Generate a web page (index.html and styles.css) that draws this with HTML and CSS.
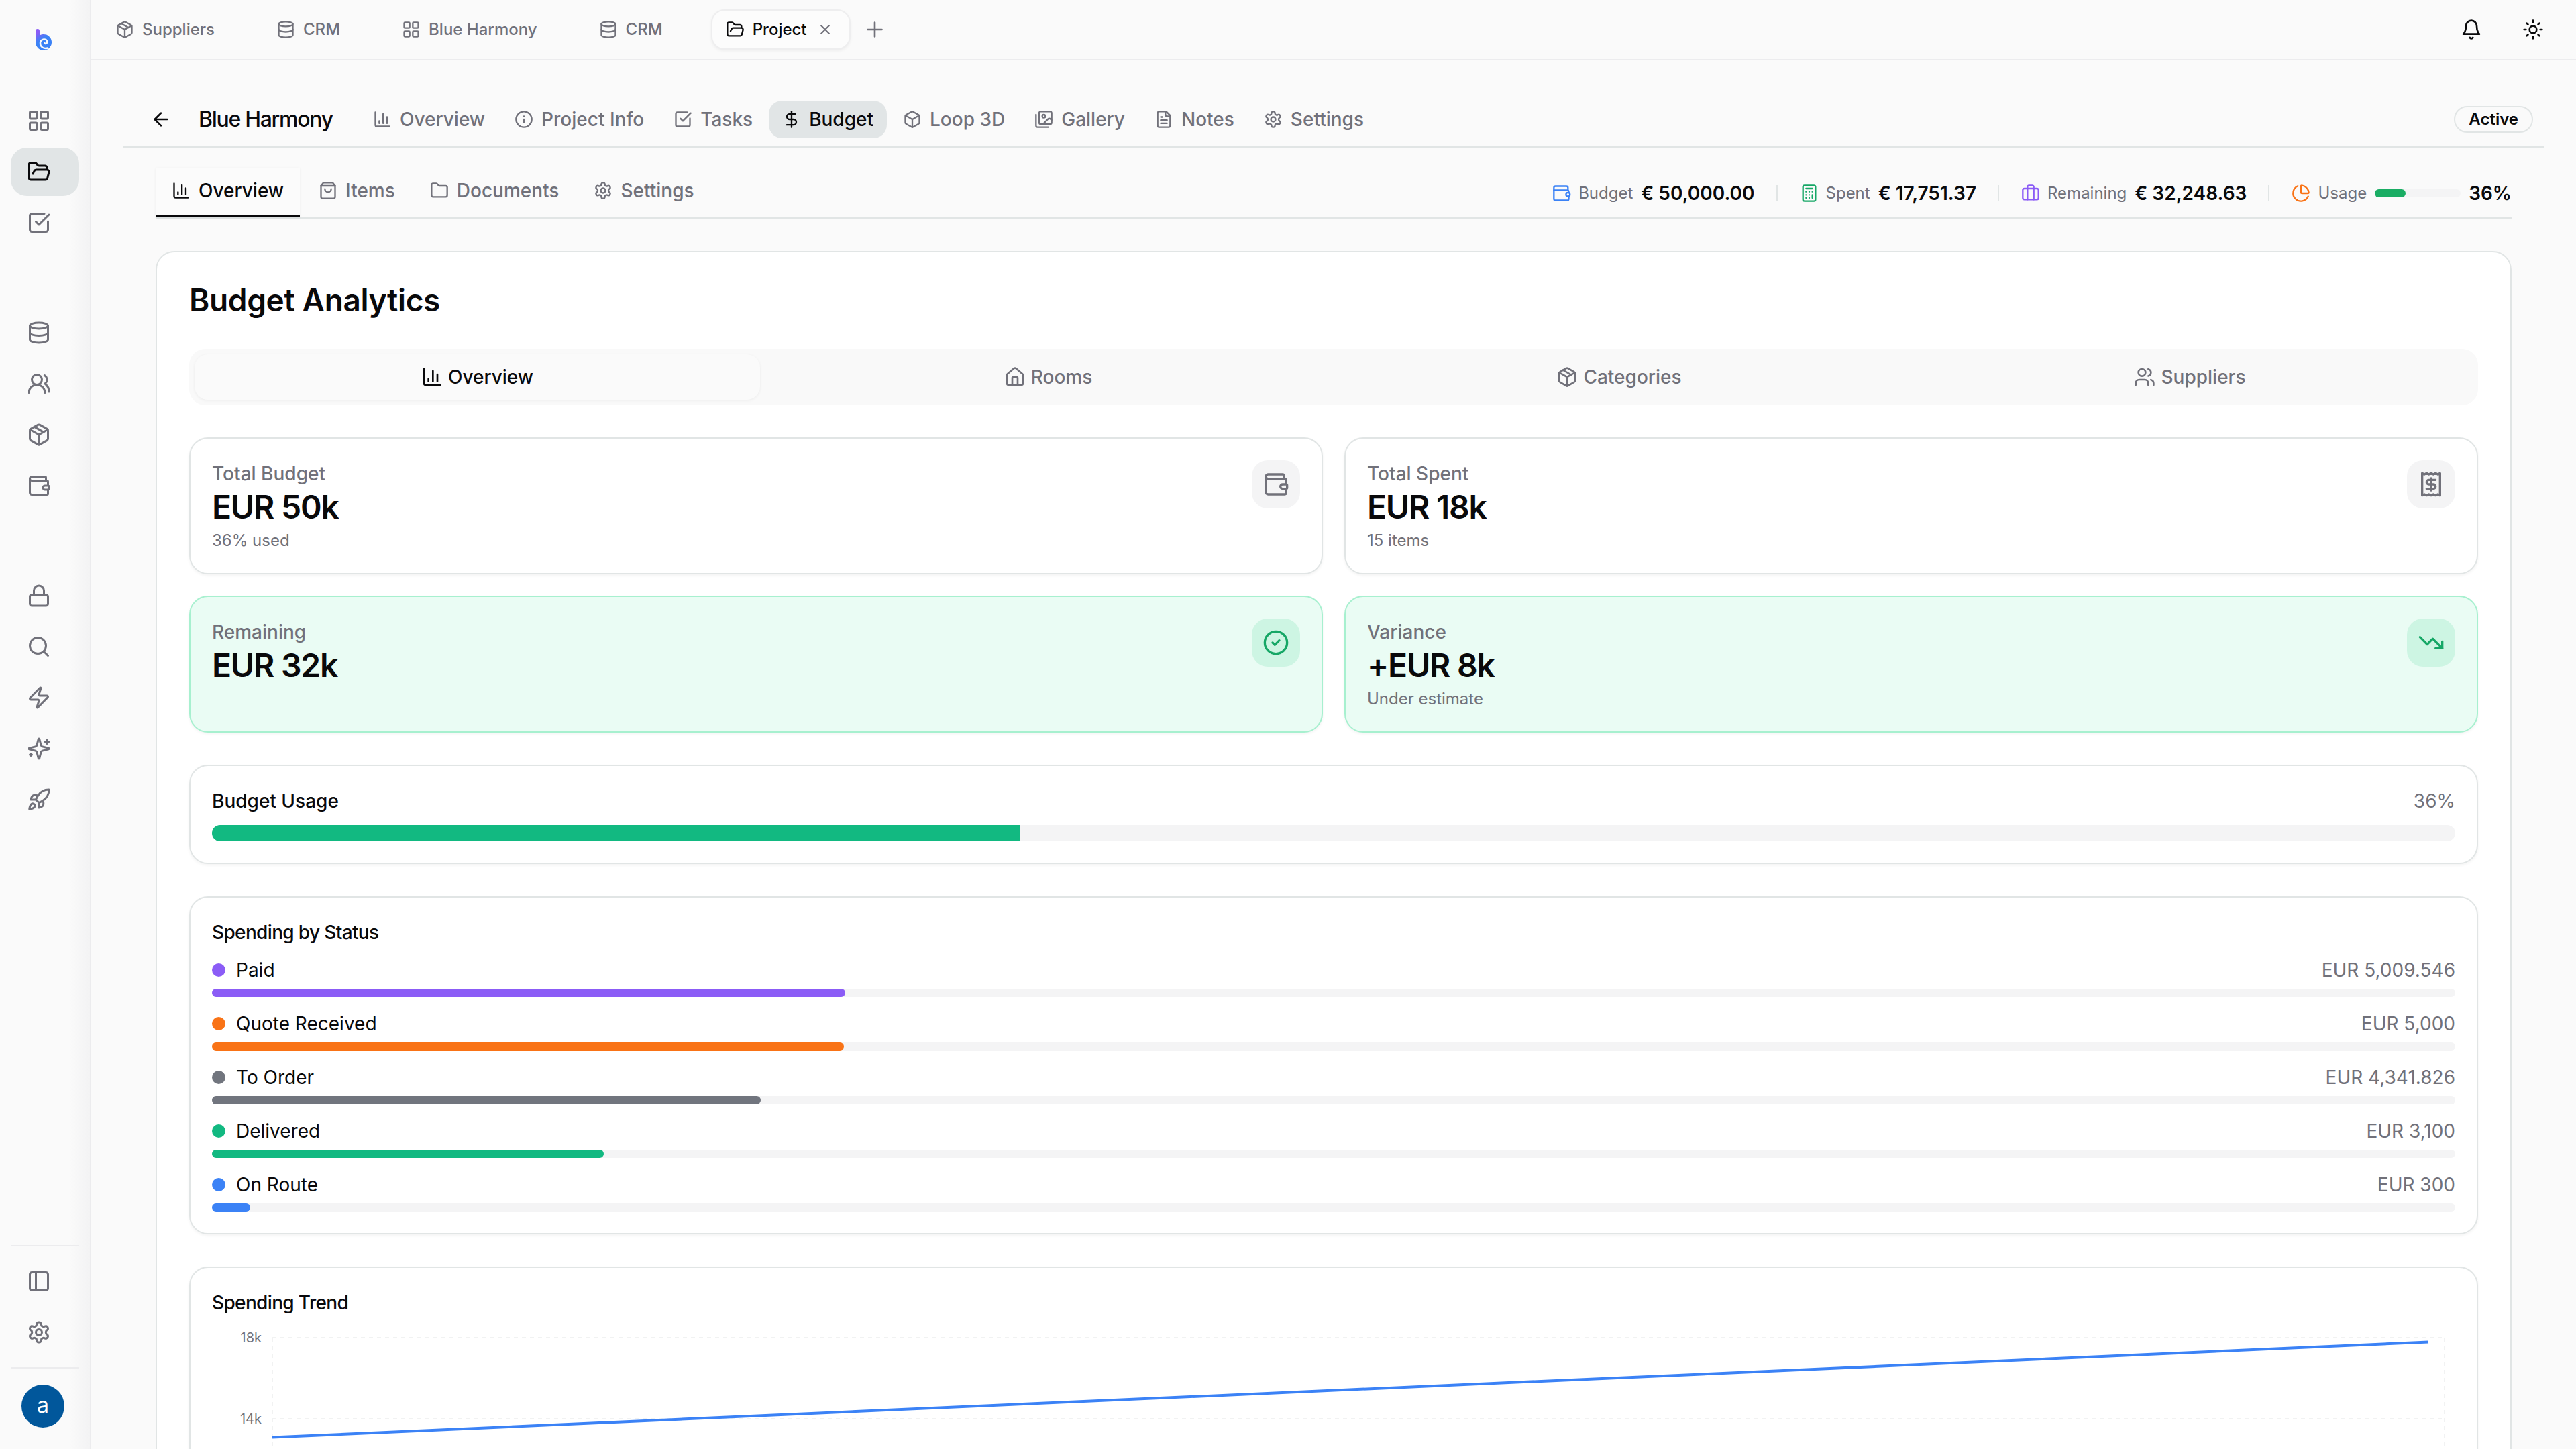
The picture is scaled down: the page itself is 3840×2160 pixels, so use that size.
FILE: index.html
```html
<!DOCTYPE html>
<html lang="en">
<head>
    <meta charset="UTF-8">
    <meta name="viewport" content="width=device-width, initial-scale=1.0">
    <title>Blue Harmony - Budget</title>
    <link rel="stylesheet" href="styles.css">
</head>
<body>
    <!-- icon sprite -->
    <svg class="sprite" width="0" height="0">
        <symbol id="grid" viewBox="0 0 24 24"><rect x="3" y="3" width="7" height="7" rx="1"/><rect x="14" y="3" width="7" height="7" rx="1"/><rect x="14" y="14" width="7" height="7" rx="1"/><rect x="3" y="14" width="7" height="7" rx="1"/></symbol>
        <symbol id="folder-open" viewBox="0 0 24 24"><path d="m6 14 1.5-2.9A2 2 0 0 1 9.24 10H20a2 2 0 0 1 1.94 2.5l-1.54 6a2 2 0 0 1-1.95 1.5H4a2 2 0 0 1-2-2V5a2 2 0 0 1 2-2h3.9a2 2 0 0 1 1.69.9l.81 1.2a2 2 0 0 0 1.67.9H18a2 2 0 0 1 2 2v2"/></symbol>
        <symbol id="check-square" viewBox="0 0 24 24"><path d="M21 10.656V19a2 2 0 0 1-2 2H5a2 2 0 0 1-2-2V5a2 2 0 0 1 2-2h12.344"/><path d="m9 11 3 3L22 4"/></symbol>
        <symbol id="database" viewBox="0 0 24 24"><ellipse cx="12" cy="5" rx="9" ry="3"/><path d="M3 5v14a9 3 0 0 0 18 0V5"/><path d="M3 12a9 3 0 0 0 18 0"/></symbol>
        <symbol id="users-round" viewBox="0 0 24 24"><path d="M18 21a8 8 0 0 0-16 0"/><circle cx="10" cy="8" r="5"/><path d="M22 20c0-3.37-2-6.5-4-8a5 5 0 0 0-.45-8.3"/></symbol>
        <symbol id="users" viewBox="0 0 24 24"><path d="M16 21v-2a4 4 0 0 0-4-4H6a4 4 0 0 0-4 4v2"/><circle cx="9" cy="7" r="4"/><path d="M22 21v-2a4 4 0 0 0-3-3.87"/><path d="M16 3.13a4 4 0 0 1 0 7.75"/></symbol>
        <symbol id="package" viewBox="0 0 24 24"><path d="M11 21.73a2 2 0 0 0 2 0l7-4A2 2 0 0 0 21 16V8a2 2 0 0 0-1-1.73l-7-4a2 2 0 0 0-2 0l-7 4A2 2 0 0 0 3 8v8a2 2 0 0 0 1 1.73z"/><path d="M12 22V12"/><path d="M3.29 7 12 12l8.71-5"/><path d="m7.5 4.27 9 5.15"/></symbol>
        <symbol id="box" viewBox="0 0 24 24"><path d="M11 21.73a2 2 0 0 0 2 0l7-4A2 2 0 0 0 21 16V8a2 2 0 0 0-1-1.73l-7-4a2 2 0 0 0-2 0l-7 4A2 2 0 0 0 3 8v8a2 2 0 0 0 1 1.73z"/><path d="M12 22V12"/><path d="m3.3 7 8.7 5 8.7-5"/></symbol>
        <symbol id="wallet" viewBox="0 0 24 24"><path d="M19 7V4a1 1 0 0 0-1-1H5a2 2 0 0 0 0 4h15a1 1 0 0 1 1 1v4h-3a2 2 0 0 0 0 4h3a1 1 0 0 0 1-1v-2a1 1 0 0 0-1-1"/><path d="M3 5v14a2 2 0 0 0 2 2h15a1 1 0 0 0 1-1v-4"/></symbol>
        <symbol id="lock" viewBox="0 0 24 24"><rect x="3" y="11" width="18" height="11" rx="2"/><path d="M7 11V7a5 5 0 0 1 10 0v4"/></symbol>
        <symbol id="search" viewBox="0 0 24 24"><circle cx="11" cy="11" r="8"/><path d="m21 21-4.3-4.3"/></symbol>
        <symbol id="zap" viewBox="0 0 24 24"><path d="M4 14a1 1 0 0 1-.78-1.63l9.9-10.2a.5.5 0 0 1 .86.46l-1.92 6.02A1 1 0 0 0 13 10h7a1 1 0 0 1 .78 1.63l-9.9 10.2a.5.5 0 0 1-.86-.46l1.92-6.02A1 1 0 0 0 11 14z"/></symbol>
        <symbol id="sparkles" viewBox="0 0 24 24"><path d="M9.937 15.5A2 2 0 0 0 8.5 14.063l-6.135-1.582a.5.5 0 0 1 0-.962L8.5 9.936A2 2 0 0 0 9.937 8.5l1.582-6.135a.5.5 0 0 1 .963 0L14.063 8.5A2 2 0 0 0 15.5 9.937l6.135 1.581a.5.5 0 0 1 0 .964L15.5 14.063a2 2 0 0 0-1.437 1.437l-1.582 6.135a.5.5 0 0 1-.963 0z"/><path d="M20 3v4M22 5h-4M4 17v2M5 18H3"/></symbol>
        <symbol id="rocket" viewBox="0 0 24 24"><path d="M4.5 16.5c-1.5 1.26-2 5-2 5s3.74-.5 5-2c.71-.84.7-2.13-.09-2.91a2.18 2.18 0 0 0-2.91-.09z"/><path d="m12 15-3-3a22 22 0 0 1 2-3.95A12.88 12.88 0 0 1 22 2c0 2.72-.78 7.5-6 11a22.35 22.35 0 0 1-4 2z"/><path d="M9 12H4s.55-3.03 2-4c1.62-1.08 5 0 5 0"/><path d="M12 15v5s3.03-.55 4-2c1.08-1.62 0-5 0-5"/></symbol>
        <symbol id="panel" viewBox="0 0 24 24"><rect x="3" y="3" width="18" height="18" rx="2"/><path d="M9 3v18"/></symbol>
        <symbol id="settings" viewBox="0 0 24 24"><path d="M12.22 2h-.44a2 2 0 0 0-2 2v.18a2 2 0 0 1-1 1.73l-.43.25a2 2 0 0 1-2 0l-.15-.08a2 2 0 0 0-2.73.73l-.22.38a2 2 0 0 0 .73 2.73l.15.1a2 2 0 0 1 1 1.72v.51a2 2 0 0 1-1 1.74l-.15.09a2 2 0 0 0-.73 2.73l.22.38a2 2 0 0 0 2.73.73l.15-.08a2 2 0 0 1 2 0l.43.25a2 2 0 0 1 1 1.73V20a2 2 0 0 0 2 2h.44a2 2 0 0 0 2-2v-.18a2 2 0 0 1 1-1.73l.43-.25a2 2 0 0 1 2 0l.15.08a2 2 0 0 0 2.73-.73l.22-.39a2 2 0 0 0-.73-2.73l-.15-.08a2 2 0 0 1-1-1.74v-.5a2 2 0 0 1 1-1.74l.15-.09a2 2 0 0 0 .73-2.73l-.22-.38a2 2 0 0 0-2.73-.73l-.15.08a2 2 0 0 1-2 0l-.43-.25a2 2 0 0 1-1-1.73V4a2 2 0 0 0-2-2z"/><circle cx="12" cy="12" r="3"/></symbol>
        <symbol id="close" viewBox="0 0 24 24"><path d="M18 6 6 18M6 6l12 12"/></symbol>
        <symbol id="plus" viewBox="0 0 24 24"><path d="M5 12h14M12 5v14"/></symbol>
        <symbol id="bell" viewBox="0 0 24 24"><path d="M6 8a6 6 0 0 1 12 0c0 7 3 9 3 9H3s3-2 3-9"/><path d="M10.3 21a1.94 1.94 0 0 0 3.4 0"/></symbol>
        <symbol id="sun" viewBox="0 0 24 24"><circle cx="12" cy="12" r="4"/><path d="M12 2v2M12 20v2M4.93 4.93l1.41 1.41M17.66 17.66l1.41 1.41M2 12h2M20 12h2M6.34 17.66l-1.41 1.41M19.07 4.93l-1.41 1.41"/></symbol>
        <symbol id="arrow-left" viewBox="0 0 24 24"><path d="m12 19-7-7 7-7"/><path d="M19 12H5"/></symbol>
        <symbol id="chart" viewBox="0 0 24 24"><path d="M3 3v16a2 2 0 0 0 2 2h16"/><path d="M18 17V9M13 17V5M8 17v-3"/></symbol>
        <symbol id="info" viewBox="0 0 24 24"><circle cx="12" cy="12" r="10"/><path d="M12 16v-4M12 8h.01"/></symbol>
        <symbol id="dollar" viewBox="0 0 24 24"><path d="M12 2v20"/><path d="M17 5H9.5a3.5 3.5 0 0 0 0 7h5a3.5 3.5 0 0 1 0 7H6"/></symbol>
        <symbol id="images" viewBox="0 0 24 24"><path d="M18 22H4a2 2 0 0 1-2-2V6"/><path d="m22 13-1.296-1.296a2.41 2.41 0 0 0-3.408 0L11 18"/><circle cx="12" cy="8" r="2"/><rect x="6" y="2" width="16" height="16" rx="2"/></symbol>
        <symbol id="file-text" viewBox="0 0 24 24"><path d="M15 2H6a2 2 0 0 0-2 2v16a2 2 0 0 0 2 2h12a2 2 0 0 0 2-2V7z"/><path d="M14 2v4a2 2 0 0 0 2 2h4"/><path d="M10 9H8M16 13H8M16 17H8"/></symbol>
        <symbol id="bag" viewBox="0 0 24 24"><path d="M6 2 3 6v14a2 2 0 0 0 2 2h14a2 2 0 0 0 2-2V6l-3-4Z"/><path d="M3 6h18"/><path d="M16 10a4 4 0 0 1-8 0"/></symbol>
        <symbol id="folder" viewBox="0 0 24 24"><path d="M20 20a2 2 0 0 0 2-2V8a2 2 0 0 0-2-2h-7.9a2 2 0 0 1-1.69-.9L9.6 3.9A2 2 0 0 0 7.93 3H4a2 2 0 0 0-2 2v13a2 2 0 0 0 2 2Z"/></symbol>
        <symbol id="wallet-dot" viewBox="0 0 24 24"><path d="M20 8V5a2 2 0 0 0-2-2H4a2 2 0 0 0-2 2v14a2 2 0 0 0 2 2h15a2 2 0 0 0 2-2v-3"/><path d="M2 8h17a2 2 0 0 1 2 2v1"/><circle cx="20" cy="13.5" r="2.5"/></symbol>
        <symbol id="calculator" viewBox="0 0 24 24"><rect x="4" y="2" width="16" height="20" rx="2"/><path d="M8 6h8M16 14v4M16 10h.01M12 10h.01M8 10h.01M12 14h.01M8 14h.01M12 18h.01M8 18h.01"/></symbol>
        <symbol id="briefcase" viewBox="0 0 24 24"><rect x="2" y="6" width="20" height="14" rx="2"/><path d="M8 20V4a2 2 0 0 1 2-2h4a2 2 0 0 1 2 2v16"/></symbol>
        <symbol id="pie" viewBox="0 0 24 24"><path d="M21 12c.552 0 1.005-.449.95-.998a10 10 0 0 0-8.953-8.951c-.55-.055-.998.398-.998.95v8a1 1 0 0 0 1 1z"/><path d="M21.21 15.89A10 10 0 1 1 8 2.83"/></symbol>
        <symbol id="house" viewBox="0 0 24 24"><path d="M15 21v-8a1 1 0 0 0-1-1h-4a1 1 0 0 0-1 1v8"/><path d="M3 10a2 2 0 0 1 .709-1.528l7-5.999a2 2 0 0 1 2.582 0l7 5.999A2 2 0 0 1 21 10v9a2 2 0 0 1-2 2H5a2 2 0 0 1-2-2z"/></symbol>
        <symbol id="receipt" viewBox="0 0 24 24"><path d="M4 2v20l2-1 2 1 2-1 2 1 2-1 2 1 2-1 2 1V2l-2 1-2-1-2 1-2-1-2 1-2-1-2 1Z"/><path d="M16 8h-6a2 2 0 1 0 0 4h4a2 2 0 1 1 0 4H8"/><path d="M12 17.5v-11"/></symbol>
        <symbol id="circle-check" viewBox="0 0 24 24"><circle cx="12" cy="12" r="10"/><path d="m9 12 2 2 4-4"/></symbol>
        <symbol id="trending-down" viewBox="0 0 24 24"><path d="M16 17h6v-6"/><path d="m22 17-8.5-8.5-5 5L2 7"/></symbol>
    </svg>

    <div class="app">
        <aside class="sidebar">
            <div class="logo">
                <svg width="26" height="33" viewBox="0 0 26 33">
                    <defs>
                        <linearGradient id="logoFill" x1="0" y1="0" x2="0.5" y2="1">
                            <stop offset="0.2" stop-color="#8b5cf6"/>
                            <stop offset="0.55" stop-color="#3b82f6"/>
                        </linearGradient>
                    </defs>
                    <path fill="url(#logoFill)" d="M1 3a3 3 0 0 1 6 0v6.5A12 12 0 1 1 1 20z"/>
                    <path fill="none" stroke="#fafafa" stroke-width="2.4" stroke-linecap="round" d="M19 28.5C12 30.5 7.500 25.500 8 20.500C8.800 14.500 17.500 13.500 18.300 19C18.300 22.500 14.800 23 14.500 20.800"/>
                </svg>
            </div>
            <nav class="side-nav">
                <div class="side-group">
                    <a class="side-item"><svg class="icon"><use href="#grid"/></svg></a>
                    <a class="side-item active"><svg class="icon"><use href="#folder-open"/></svg></a>
                    <a class="side-item"><svg class="icon"><use href="#check-square"/></svg></a>
                </div>
                <div class="side-group">
                    <a class="side-item"><svg class="icon"><use href="#database"/></svg></a>
                    <a class="side-item"><svg class="icon"><use href="#users-round"/></svg></a>
                    <a class="side-item"><svg class="icon"><use href="#package"/></svg></a>
                    <a class="side-item"><svg class="icon"><use href="#wallet"/></svg></a>
                </div>
                <div class="side-group">
                    <a class="side-item"><svg class="icon"><use href="#lock"/></svg></a>
                    <a class="side-item"><svg class="icon"><use href="#search"/></svg></a>
                    <a class="side-item"><svg class="icon"><use href="#zap"/></svg></a>
                    <a class="side-item"><svg class="icon"><use href="#sparkles"/></svg></a>
                    <a class="side-item"><svg class="icon"><use href="#rocket"/></svg></a>
                </div>
            </nav>
            <div class="side-group side-bottom">
                <a class="side-item"><svg class="icon"><use href="#panel"/></svg></a>
                <a class="side-item"><svg class="icon"><use href="#settings"/></svg></a>
            </div>
            <div class="side-user">
                <div class="avatar">a</div>
            </div>
        </aside>

        <main class="main">
            <header class="topbar">
                <div class="tab"><svg class="icon"><use href="#package"/></svg><span>Suppliers</span></div>
                <div class="tab"><svg class="icon"><use href="#database"/></svg><span>CRM</span></div>
                <div class="tab"><svg class="icon"><use href="#grid"/></svg><span>Blue Harmony</span></div>
                <div class="tab"><svg class="icon"><use href="#database"/></svg><span>CRM</span></div>
                <div class="tab active"><svg class="icon"><use href="#folder-open"/></svg><span>Project</span><svg class="icon tab-close"><use href="#close"/></svg></div>
                <svg class="icon tab-add"><use href="#plus"/></svg>
                <div class="top-actions">
                    <svg class="icon"><use href="#bell"/></svg>
                    <svg class="icon"><use href="#sun"/></svg>
                </div>
            </header>

            <div class="project-bar">
                <svg class="icon back"><use href="#arrow-left"/></svg>
                <h1 class="project-name">Blue Harmony</h1>
                <nav class="project-nav">
                    <a class="nav-item"><svg class="icon"><use href="#chart"/></svg>Overview</a>
                    <a class="nav-item"><svg class="icon"><use href="#info"/></svg>Project Info</a>
                    <a class="nav-item"><svg class="icon"><use href="#check-square"/></svg>Tasks</a>
                    <a class="nav-item active"><svg class="icon"><use href="#dollar"/></svg>Budget</a>
                    <a class="nav-item"><svg class="icon"><use href="#box"/></svg>Loop 3D</a>
                    <a class="nav-item"><svg class="icon"><use href="#images"/></svg>Gallery</a>
                    <a class="nav-item"><svg class="icon"><use href="#file-text"/></svg>Notes</a>
                    <a class="nav-item"><svg class="icon"><use href="#settings"/></svg>Settings</a>
                </nav>
                <span class="status">Active</span>
            </div>

            <div class="sub-bar">
                <nav class="sub-nav">
                    <a class="sub-item active"><svg class="icon"><use href="#chart"/></svg>Overview</a>
                    <a class="sub-item"><svg class="icon"><use href="#bag"/></svg>Items</a>
                    <a class="sub-item"><svg class="icon"><use href="#folder"/></svg>Documents</a>
                    <a class="sub-item"><svg class="icon"><use href="#settings"/></svg>Settings</a>
                </nav>
                <div class="stats">
                    <div class="stat"><svg class="icon blue"><use href="#wallet-dot"/></svg><span>Budget</span><b>€ 50,000.00</b></div>
                    <div class="stat"><svg class="icon green"><use href="#calculator"/></svg><span>Spent</span><b>€ 17,751.37</b></div>
                    <div class="stat"><svg class="icon purple"><use href="#briefcase"/></svg><span>Remaining</span><b>€ 32,248.63</b></div>
                    <div class="stat"><svg class="icon orange"><use href="#pie"/></svg><span>Usage</span><div class="mini-bar"><div class="mini-fill" style="width: 36%"></div></div><b>36%</b></div>
                </div>
            </div>

            <section class="panel">
                <h2 class="panel-title">Budget Analytics</h2>

                <div class="segments">
                    <div class="segment active"><svg class="icon"><use href="#chart"/></svg>Overview</div>
                    <div class="segment"><svg class="icon"><use href="#house"/></svg>Rooms</div>
                    <div class="segment"><svg class="icon"><use href="#package"/></svg>Categories</div>
                    <div class="segment"><svg class="icon"><use href="#users"/></svg>Suppliers</div>
                </div>

                <div class="kpis">
                    <div class="card kpi">
                        <div>
                            <div class="kpi-label">Total Budget</div>
                            <div class="kpi-value">EUR 50k</div>
                            <div class="kpi-note">36% used</div>
                        </div>
                        <div class="kpi-icon"><svg class="icon"><use href="#wallet"/></svg></div>
                    </div>
                    <div class="card kpi">
                        <div>
                            <div class="kpi-label">Total Spent</div>
                            <div class="kpi-value">EUR 18k</div>
                            <div class="kpi-note">15 items</div>
                        </div>
                        <div class="kpi-icon"><svg class="icon"><use href="#receipt"/></svg></div>
                    </div>
                    <div class="card kpi good">
                        <div>
                            <div class="kpi-label">Remaining</div>
                            <div class="kpi-value">EUR 32k</div>
                        </div>
                        <div class="kpi-icon"><svg class="icon"><use href="#circle-check"/></svg></div>
                    </div>
                    <div class="card kpi good">
                        <div>
                            <div class="kpi-label">Variance</div>
                            <div class="kpi-value">+EUR 8k</div>
                            <div class="kpi-note">Under estimate</div>
                        </div>
                        <div class="kpi-icon"><svg class="icon"><use href="#trending-down"/></svg></div>
                    </div>
                </div>

                <div class="card">
                    <div class="row usage-row"><span>Budget Usage</span><span class="muted">36%</span></div>
                    <div class="usage-bar"><div class="usage-fill" style="width: 36%"></div></div>
                </div>

                <div class="card">
                    <h3 class="card-title">Spending by Status</h3>
                    <div class="status-list">
                        <div class="status-item paid">
                            <div class="row"><span class="dot"></span><span>Paid</span><span class="amount">EUR 5,009.546</span></div>
                            <div class="bar"><div class="fill" style="width: 28.22%"></div></div>
                        </div>
                        <div class="status-item quote">
                            <div class="row"><span class="dot"></span><span>Quote Received</span><span class="amount">EUR 5,000</span></div>
                            <div class="bar"><div class="fill" style="width: 28.17%"></div></div>
                        </div>
                        <div class="status-item to-order">
                            <div class="row"><span class="dot"></span><span>To Order</span><span class="amount">EUR 4,341.826</span></div>
                            <div class="bar"><div class="fill" style="width: 24.46%"></div></div>
                        </div>
                        <div class="status-item delivered">
                            <div class="row"><span class="dot"></span><span>Delivered</span><span class="amount">EUR 3,100</span></div>
                            <div class="bar"><div class="fill" style="width: 17.46%"></div></div>
                        </div>
                        <div class="status-item on-route">
                            <div class="row"><span class="dot"></span><span>On Route</span><span class="amount">EUR 300</span></div>
                            <div class="bar"><div class="fill" style="width: 1.69%"></div></div>
                        </div>
                    </div>
                </div>

                <div class="card trend">
                    <h3 class="card-title">Spending Trend</h3>
                    <svg class="chart" width="3344" height="400" viewBox="0 0 3344 400">
                        <g class="gridlines">
                            <path d="M90 16H3328M90 137H3328M90 258H3328M90 379H3328"/>
                            <path d="M90 16V379M3328 16V379"/>
                        </g>
                        <g class="ticks">
                            <text x="74" y="23">18k</text>
                            <text x="74" y="144">14k</text>
                        </g>
                        <path class="trend-line" d="M90 164.5L3304 22.5"/>
                    </svg>
                </div>
            </section>
        </main>
    </div>
</body>
</html>
```
FILE: styles.css
```css
* {
    box-sizing: border-box;
}
body {
    margin: 0;
    height: 2160px;
    overflow: hidden;
    background: #fafafa;
    color: #09090b;
    font-family: Inter, "Liberation Sans", sans-serif;
    font-size: 28px;
    line-height: 40px;
}
h1, h2, h3 {
    margin: 0;
    font-weight: 500;
}
.sprite {
    display: none;
}
.icon {
    width: 28px;
    height: 28px;
    flex: none;
    fill: none;
    stroke: currentColor;
    stroke-width: 2;
    stroke-linecap: round;
    stroke-linejoin: round;
}
.app {
    display: flex;
    height: 2160px;
    overflow: hidden;
}

/* sidebar */
.sidebar {
    display: flex;
    flex-direction: column;
    flex: none;
    width: 136px;
    padding: 0 16px 32px;
    border-right: 2px solid #ececee;
    background: linear-gradient(to right, #fafafa 104px, #f3f3f4);
    color: #71717a;
}
.logo {
    height: 144px;
    padding: 43px 0 0 36px;
    line-height: 0;
}
.side-nav {
    display: flex;
    flex-direction: column;
    gap: 92px;
    flex: 1;
}
.side-group {
    display: flex;
    flex-direction: column;
    gap: 4px;
}
.side-item {
    display: flex;
    align-items: center;
    height: 72px;
    padding-left: 24px;
    border-radius: 24px;
}
.side-item .icon {
    width: 36px;
    height: 36px;
}
.side-item.active {
    background: #e1e5e6;
    color: #09090b;
}
.side-bottom {
    padding: 16px 0;
    border-top: 2px solid #ececee;
}
.side-user {
    padding: 24px 0 0 16px;
    border-top: 2px solid #ececee;
}
.avatar {
    width: 64px;
    height: 64px;
    border-radius: 50%;
    background: #01579b;
    color: #fff;
    text-align: center;
    line-height: 62px;
    font-size: 32px;
}

/* open tabs */
.main {
    flex: 1;
    min-width: 0;
}
.topbar {
    display: flex;
    align-items: center;
    gap: 4px;
    height: 90px;
    padding: 0 48px 0 14px;
    border-bottom: 2px solid #ececee;
    color: #71717a;
    font-size: 24px;
    font-weight: 500;
}
.tab {
    display: flex;
    align-items: center;
    gap: 12px;
    height: 60px;
    padding: 0 64px 0 20px;
    border: 2px solid transparent;
    border-radius: 20px;
}
.tab.active {
    padding-right: 24px;
    margin-left: 2px;
    border-color: #eeeeef;
    background: #fcfcfc;
    box-shadow: 0 2px 4px rgba(0, 0, 0, 0.05);
    color: #09090b;
}
.tab-close {
    width: 24px;
    height: 24px;
    margin-left: 3px;
    color: #71717a;
}
.tab-add {
    width: 36px;
    height: 36px;
    margin-left: 14px;
    stroke-width: 1.75;
}
.top-actions {
    display: flex;
    gap: 60px;
    margin-left: auto;
    color: #09090b;
}
.top-actions .icon {
    width: 32px;
    height: 32px;
}

/* project header */
.project-bar {
    display: flex;
    align-items: center;
    height: 130px;
    margin: 0 48px;
    padding: 48px 16px 0 40px;
    border-bottom: 2px solid #e1e5e5;
}
.back {
    width: 32px;
    height: 32px;
}
.project-name {
    width: 240px;
    margin-left: 40px;
    font-size: 32px;
    letter-spacing: -1.3px;
    white-space: nowrap;
}
.project-nav {
    display: flex;
    gap: 4px;
    color: #71717a;
    font-weight: 500;
}
.nav-item {
    display: flex;
    align-items: center;
    gap: 12px;
    height: 56px;
    padding: 0 20px;
    border-radius: 20px;
}
.nav-item.active {
    background: #e1e5e6;
    color: #09090b;
}
.status {
    height: 40px;
    margin-left: auto;
    padding: 0 20px;
    border: 2px solid #e1e5e5;
    border-radius: 20px;
    font-size: 24px;
    font-weight: 600;
    line-height: 36px;
}

/* budget sub navigation */
.sub-bar {
    display: flex;
    justify-content: space-between;
    height: 106px;
    margin: 0 96px;
    padding-top: 30px;
    border-bottom: 2px solid #e1e5e5;
}
.sub-nav {
    display: flex;
    gap: 4px;
    color: #71717a;
    font-weight: 500;
}
.sub-item {
    display: flex;
    align-items: center;
    gap: 12px;
    height: 74px;
    padding: 0 24px 2px;
    border-bottom: 4px solid transparent;
}
.sub-item.active {
    border-bottom-color: #09090b;
    background: #fbfbfb;
    box-shadow: 0 1px 4px rgba(0, 0, 0, 0.05);
    color: #09090b;
}
.stats {
    display: flex;
    align-items: center;
    height: 76px;
}
.stat {
    display: flex;
    align-items: center;
    gap: 12px;
}
.stat .icon {
    margin-right: -1px;
}
.stat + .stat::before {
    content: "";
    width: 2px;
    height: 24px;
    margin: 0 21px 0 32px;
    background: #e1e5e5;
}
.stat span {
    color: #71717a;
    font-size: 24px;
}
.stat b {
    font-weight: 600;
}
.blue { color: #3b82f6; }
.green { color: #16a766; }
.purple { color: #8b5cf6; }
.orange { color: #f97316; }
.mini-bar {
    width: 128px;
    height: 12px;
    border-radius: 6px;
    background: #f4f4f5;
}
.mini-fill {
    height: 12px;
    border-radius: 6px;
    background: #1aad64;
}

/* analytics panel */
.panel {
    display: flex;
    flex-direction: column;
    gap: 48px;
    height: 2000px;
    margin: 48px 96px 0;
    padding: 48px;
    border: 2px solid #e1e5e5;
    border-radius: 28px;
    background: #fff;
}
.panel-title {
    flex: none;
    height: 48px;
    font-size: 46px;
    font-weight: 600;
    line-height: 46px;
    letter-spacing: -0.35px;
}
.segments {
    display: grid;
    grid-template-columns: repeat(4, 1fr);
    gap: 8px;
    flex: none;
    height: 84px;
    padding: 8px;
    border-radius: 24px;
    background: #f9f9f9;
    color: #71717a;
    font-weight: 500;
}
.segment {
    display: flex;
    align-items: center;
    justify-content: center;
    gap: 8px;
    border-radius: 20px;
}
.segment.active {
    background: #fafafa;
    box-shadow: 0 1px 4px rgba(0, 0, 0, 0.06);
    color: #09090b;
}
.segment .icon {
    width: 32px;
    height: 32px;
}
.card {
    flex: none;
    padding: 32px;
    border: 2px solid #e1e5e5;
    border-radius: 28px;
    background: #fff;
    box-shadow: 0 2px 4px rgba(0, 0, 0, 0.05);
}
.kpis {
    display: grid;
    grid-template-columns: 1fr 1fr;
    gap: 32px;
    flex: none;
}
.kpi {
    display: flex;
    justify-content: space-between;
    height: 204px;
}
.kpi-label {
    color: #71717a;
    font-weight: 500;
}
.kpi-value {
    font-size: 48px;
    font-weight: 600;
    line-height: 60px;
    letter-spacing: -1.2px;
}
.kpi-note {
    margin-top: 4px;
    color: #71717a;
    font-size: 24px;
    line-height: 32px;
}
.kpi-icon {
    display: flex;
    align-items: center;
    justify-content: center;
    width: 72px;
    height: 72px;
    border-radius: 24px;
    background: #f4f4f5;
    color: #71717a;
}
.kpi-icon .icon {
    width: 40px;
    height: 40px;
}
.kpi.good {
    border-color: #a7f0cf;
    background: #eafcf4;
}
.good .kpi-icon {
    background: #cdf5e3;
    color: #16a766;
}

/* bars */
.row {
    display: flex;
    align-items: center;
}
.usage-row {
    justify-content: space-between;
    font-weight: 500;
}
.muted {
    color: #71717a;
    font-weight: 400;
}
.usage-bar {
    height: 24px;
    margin-top: 16px;
    border-radius: 12px;
    background: #f4f4f5;
    overflow: hidden;
}
.usage-fill {
    height: 24px;
    background: #12b981;
}
.card-title {
    font-size: 28px;
    letter-spacing: -0.65px;
}
.status-list {
    display: flex;
    flex-direction: column;
    gap: 20px;
    margin-top: 16px;
}
.dot {
    width: 20px;
    height: 20px;
    margin-right: 16px;
    border-radius: 50%;
}
.amount {
    margin-left: auto;
    color: #71717a;
}
.bar {
    height: 12px;
    margin-top: 8px;
    border-radius: 6px;
    background: #f4f4f5;
}
.fill {
    height: 12px;
    border-radius: 6px;
}
.paid .dot, .paid .fill { background: #8b5cf6; }
.quote .dot, .quote .fill { background: #f97316; }
.to-order .dot, .to-order .fill { background: #71757e; }
.delivered .dot, .delivered .fill { background: #12b981; }
.on-route .dot, .on-route .fill { background: #3b82f6; }

/* trend chart */
.chart {
    display: block;
    margin-top: 16px;
}
.gridlines {
    fill: none;
    stroke: #f1f2f2;
    stroke-width: 2;
    stroke-dasharray: 6 6;
}
.ticks {
    fill: #71717a;
    font-size: 20px;
    text-anchor: end;
}
.trend-line {
    fill: none;
    stroke: #3b82f6;
    stroke-width: 4;
}
```
